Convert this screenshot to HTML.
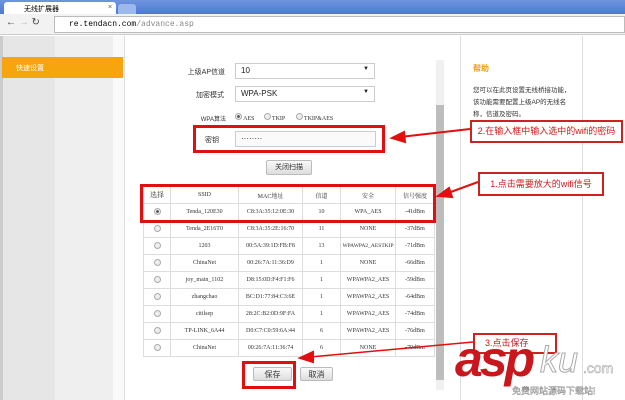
<!DOCTYPE html><html><head><meta charset="utf-8"><style>
*{margin:0;padding:0;box-sizing:border-box}
body{width:625px;height:400px;overflow:hidden;position:relative;background:#fff;font-family:"Liberation Sans","Noto Sans CJK SC",sans-serif;font-size:7px;color:#333}
.a{position:absolute}
.inp{position:absolute;border:1px solid #ccc;background:#fff;font-size:8px;padding:2px 5px;color:#222}
.btn{position:absolute;border:1px solid #bbb;background:linear-gradient(#fafafa,#ddd);border-radius:2px;font-size:7px;text-align:center;line-height:13px}
.red{position:absolute;border:3px solid #e01010}
.note{position:absolute;border:2px solid #c22;background:#fff;color:#d01818;font-size:9px;text-align:center;z-index:5}
table{position:absolute;left:143px;top:186px;border-collapse:collapse;font-family:"Liberation Serif","Noto Serif CJK SC",serif;font-size:6px}
td{border:1px solid #ddd;height:17px;text-align:center;color:#333;padding:0}
.rd{display:inline-block;width:7px;height:7px;border-radius:50%;border:1px solid #aaa;background:#eee}
</style></head><body>
<div class="a" style="left:0;top:0;width:625px;height:14px;background:linear-gradient(#6f95df,#4e79d2)"></div>
<div class="a" style="left:4px;top:2px;width:112px;height:13px;background:#fff;border-radius:3px 3px 0 0;font-size:7px;padding:2px 0 0 20px;color:#000">无线扩展器<span style="position:absolute;left:104px;color:#555">×</span></div>
<div class="a" style="left:118px;top:4px;width:18px;height:10px;background:#9db8ea;border-radius:3px 3px 0 0"></div>
<div class="a" style="left:0;top:14px;width:625px;height:21px;background:#f2f2f2;border-bottom:1px solid #ccc"></div>
<div class="a" style="left:6px;top:17px;font-size:10px;color:#444">←&nbsp;<span style="color:#bbb">→</span>&nbsp;↻</div>
<div class="a" style="left:54px;top:16px;width:571px;height:17px;background:#fff;border:1px solid #bbb;font-family:'Liberation Mono',monospace;font-size:8px;padding:3px 0 0 14px;color:#000">re.tendacn.com<span style="color:#888">/advance.asp</span></div>
<div class="a" style="left:0;top:36px;width:3px;height:364px;background:#ccc"></div>
<div class="a" style="left:3px;top:36px;width:52px;height:364px;background:#e6e6e6"></div>
<div class="a" style="left:55px;top:36px;width:58px;height:364px;background:#efefef"></div>
<div class="a" style="left:113px;top:36px;width:12px;height:364px;background:#fafafa;border-right:1px solid #ddd"></div>
<div class="a" style="left:2px;top:57px;width:121px;height:21px;background:#f6a50e;color:#fff;font-size:7px;padding:6px 0 0 14px">快速设置</div>
<div class="a" style="left:460px;top:36px;width:1px;height:364px;background:#ddd"></div>
<div class="a" style="left:582px;top:36px;width:1px;height:364px;background:#ddd"></div>
<div class="a" style="left:473px;top:63px;color:#f0a000;font-size:8px;font-weight:bold">帮助</div>
<div class="a" style="left:473px;top:85px;width:100px;font-size:6.5px;line-height:12px;color:#333">您可以在此页设置无线桥接功能，该功能需要配置上级AP的无线名称，信道及密码。</div>
<div class="a" style="left:436px;top:60px;width:8px;height:330px;background:#f0f0f0"></div>
<div class="a" style="left:436px;top:105px;width:8px;height:275px;background:#bdbdbd"></div>
<div class="a" style="left:170px;top:67px;width:55px;text-align:right;white-space:nowrap">上级AP信道</div>
<div class="inp" style="left:235px;top:63px;width:140px;height:16px">10<span style="float:right;font-size:6px">▼</span></div>
<div class="a" style="left:188px;top:90px;width:36px;text-align:right">加密模式</div>
<div class="inp" style="left:235px;top:86px;width:140px;height:16px">WPA-PSK<span style="float:right;font-size:6px">▼</span></div>
<div class="a" style="left:186px;top:114px;width:40px;text-align:right;font-size:6px">WPA算法</div>
<div class="a" style="left:235px;top:113px;font-size:6px;font-family:'Liberation Serif',serif"><span class="rd" style="background:radial-gradient(#555 35%,#eee 45%)"></span> AES &nbsp;&nbsp;&nbsp;&nbsp;&nbsp;<span class="rd"></span> TKIP &nbsp;&nbsp;&nbsp;&nbsp;&nbsp;&nbsp;<span class="rd"></span> TKIP&amp;AES</div>
<div class="red" style="left:193px;top:125px;width:192px;height:28px"></div>
<div class="a" style="left:205px;top:135px;font-size:7px">密钥</div>
<div class="inp" style="left:235px;top:131px;width:141px;height:16px;background:#fafafa">········</div>
<div class="btn" style="left:266px;top:160px;width:46px;height:15px">关闭扫描</div>
<table>
<tr><td style="width:27px;font-size:7px">选择</td><td style="width:68px">SSID</td><td style="width:64px">MAC地址</td><td style="width:38px">信道</td><td style="width:55px">安全</td><td style="width:39px">信号强度</td></tr>
<tr><td><span class="rd" style="background:radial-gradient(#555 35%,#eee 45%)"></span></td><td>Tenda_120E30</td><td>C8:3A:35:12:0E:30</td><td>10</td><td>WPA_AES</td><td>-41dBm</td></tr>
<tr><td><span class="rd"></span></td><td>Tenda_2E16T0</td><td>C8:3A:35:2E:16:70</td><td>11</td><td>NONE</td><td>-37dBm</td></tr>
<tr><td><span class="rd"></span></td><td>1203</td><td>00:5A:39:1D:FB:F8</td><td>13</td><td style="font-size:5.5px">WPAWPA2_AESTKIP</td><td>-71dBm</td></tr>
<tr><td><span class="rd"></span></td><td>ChinaNet</td><td>00:26:7A:11:36:D9</td><td>1</td><td>NONE</td><td>-66dBm</td></tr>
<tr><td><span class="rd"></span></td><td>joy_main_1102</td><td>D8:15:0D:F4:F1:F6</td><td>1</td><td>WPAWPA2_AES</td><td>-59dBm</td></tr>
<tr><td><span class="rd"></span></td><td>zhangchao</td><td>BC:D1:77:84:C3:6E</td><td>1</td><td>WPAWPA2_AES</td><td>-64dBm</td></tr>
<tr><td><span class="rd"></span></td><td>citilsep</td><td>28:2C:B2:0D:9F:FA</td><td>1</td><td>WPAWPA2_AES</td><td>-74dBm</td></tr>
<tr><td><span class="rd"></span></td><td>TP-LINK_6A44</td><td>D0:C7:C0:59:6A:44</td><td>6</td><td>WPAWPA2_AES</td><td>-76dBm</td></tr>
<tr><td><span class="rd"></span></td><td>ChinaNet</td><td>00:26:7A:11:36:74</td><td>6</td><td>NONE</td><td>-79dBm</td></tr>
</table>
<div class="red" style="left:140px;top:184px;width:296px;height:39px"></div>
<div class="btn" style="left:253px;top:367px;width:39px;height:14px;font-size:8px">保存</div>
<div class="btn" style="left:300px;top:367px;width:33px;height:14px;font-size:8px">取消</div>
<div class="red" style="left:242px;top:361px;width:54px;height:28px"></div>
<div class="note" style="left:470px;top:120px;width:153px;height:23px;line-height:19px">2.在输入框中输入选中的wifi的密码</div>
<div class="note" style="left:478px;top:172px;width:126px;height:24px;line-height:20px">1.点击需要放大的wifi信号</div>
<div class="note" style="left:473px;top:333px;width:84px;height:21px;line-height:17px;text-align:left;padding-left:10px">3.点击保存</div>
<svg class="a" style="left:0;top:0" width="625" height="400">
<g stroke="#e01010" stroke-width="2" fill="#e01010">
<line x1="470" y1="129" x2="400" y2="137"/><polygon points="392,138 404,132 405,142"/>
<line x1="478" y1="182" x2="448" y2="193"/><polygon points="438,196 449,188 452,197"/>
<line x1="473" y1="342" x2="310" y2="357" stroke-width="1.5"/><polygon points="300,358 313,352 313,362"/>
</g></svg>
<div class="a" style="left:455px;top:334px;font-size:50px;line-height:50px;font-weight:bold;font-style:italic;color:#c8171d;letter-spacing:-3px;font-family:'Liberation Sans',sans-serif;z-index:6">asp</div>
<div class="a" style="left:540px;top:340px;font-size:36px;line-height:40px;color:#fff;-webkit-text-stroke:1px #aaa;font-style:italic;z-index:6">ku</div>
<div class="a" style="left:583px;top:360px;font-size:14px;color:#fff;-webkit-text-stroke:0.5px #999;z-index:6">.com</div>
<div class="a" style="left:512px;top:384px;font-size:9px;color:#fff;-webkit-text-stroke:0.4px #888;z-index:6">免费网站源码下载站!</div>
</body></html>
